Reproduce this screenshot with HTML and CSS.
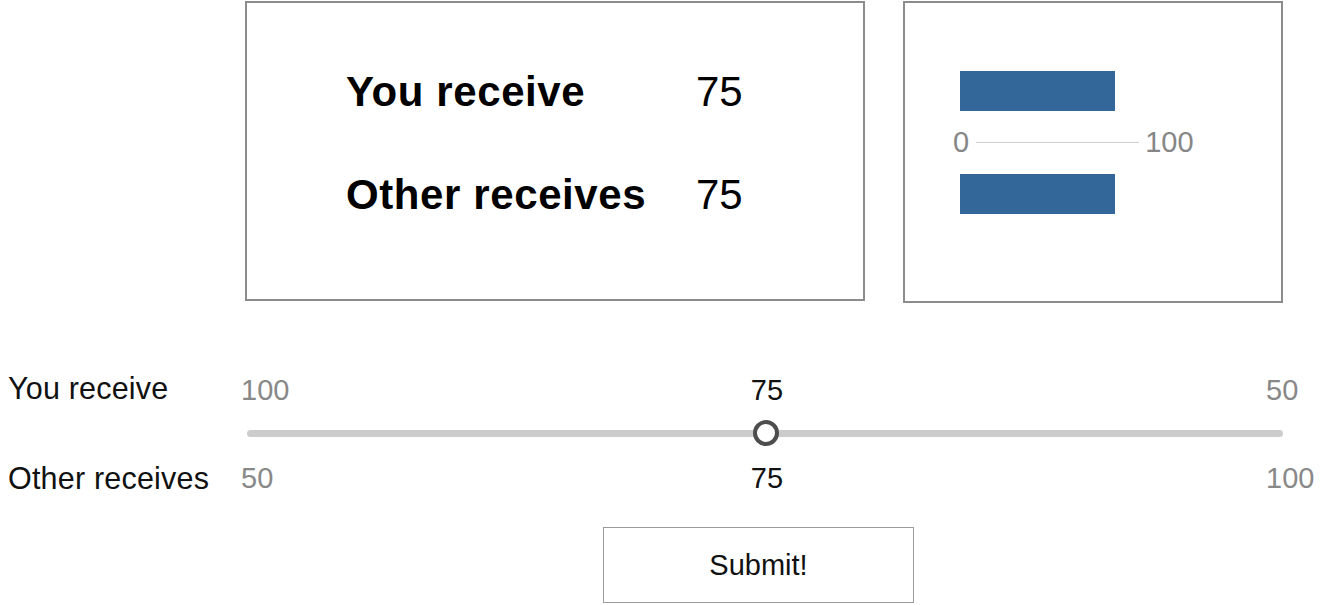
FILE: index.html
```html
<!DOCTYPE html>
<html>
<head>
<meta charset="utf-8">
<link rel="stylesheet" href="styles.css">
</head>
<body>
<div class="top">
  <div class="card summary">
    <div class="sum-label">You receive</div><div class="sum-value">75</div>
    <div class="sum-label">Other receives</div><div class="sum-value">75</div>
  </div>
  <div class="card chart">
    <div class="bar" style="width:155px"></div>
    <div class="axis">
      <span class="axis-label">0</span>
      <span class="axis-line"></span>
      <span class="axis-label">100</span>
    </div>
    <div class="bar" style="width:155px"></div>
  </div>
</div>

<div class="slider-grid">
  <div class="row-label r1">You receive</div>
  <div class="scale r1">
    <span class="end">100</span><span class="mid">75</span><span class="end right">50</span>
  </div>
  <div class="track-row">
    <div class="track">
      <div class="thumb" style="left:50.1%"></div>
    </div>
  </div>
  <div class="row-label r3">Other receives</div>
  <div class="scale r3">
    <span class="end">50</span><span class="mid">75</span><span class="end right">100</span>
  </div>
</div>

<div class="actions">
  <button class="submit">Submit!</button>
</div>
</body>
</html>
```

FILE: styles.css
```css
html, body {
  margin: 0;
  padding: 0;
  background: #ffffff;
}
body {
  font-family: "Liberation Sans", Arial, Helvetica, sans-serif;
  color: #111;
  width: 1320px;
  height: 605px;
  overflow: hidden;
}

.top {
  display: flex;
  gap: 38px;
  padding: 1px 0 0 245px;
}

.card {
  box-sizing: border-box;
  border: 2px solid #8c8c8c;
  background: #fff;
}

.summary {
  width: 620px;
  height: 300px;
  display: grid;
  grid-template-columns: 350px auto;
  grid-auto-rows: 50px;
  row-gap: 53px;
  align-content: start;
  padding: 64px 0 0 99px;
}
.sum-label {
  font-size: 42px;
  line-height: 50px;
  font-weight: bold;
  color: #000;
  letter-spacing: 0.6px;
}
.sum-value {
  font-size: 42px;
  line-height: 50px;
  color: #000;
}

.chart {
  width: 380px;
  height: 302px;
  display: flex;
  flex-direction: column;
  padding-top: 68px;
}
.bar {
  height: 40px;
  margin-left: 55px;
  background: #336699;
}
.axis {
  height: 63px;
  display: flex;
  align-items: center;
  padding-left: 48px;
  gap: 7px;
}
.axis-label {
  font-size: 29px;
  color: #868686;
  line-height: 1;
}
.axis-line {
  width: 163px;
  height: 1px;
  background: #cfcfcf;
  margin-right: -1px;
}

.slider-grid {
  display: grid;
  grid-template-columns: 233px 1080px;
  margin: 68px 0 0 8px;
}
.row-label {
  font-size: 30.5px;
  letter-spacing: 0.2px;
  color: #111;
}
.r1 { line-height: 34px; height: 36px; }
.r3 { line-height: 38px; height: 38px; }
.scale {
  grid-column: 2;
  display: grid;
  grid-template-columns: 500px 52px 1fr;
  font-size: 29px;
  letter-spacing: 0;
}
.r1.scale { line-height: 38px; }
.scale .end { color: #888; }
.scale .mid { color: #111; text-align: center; }
.scale .right { padding-left: 473px; }

.track-row {
  grid-column: 2;
  height: 52px;
  display: flex;
  align-items: center;
  padding-left: 6px;
}
.track {
  position: relative;
  width: 1036px;
  height: 7px;
  border-radius: 4px;
  background: #cccccc;
}
.thumb {
  position: absolute;
  top: 50%;
  width: 26px;
  height: 26px;
  box-sizing: border-box;
  border: 4px solid #4d4d4d;
  border-radius: 50%;
  background: #fff;
  transform: translate(-50%, -50%);
}

.actions {
  display: flex;
  padding: 30px 0 0 603px;
}
.submit {
  width: 311px;
  height: 76px;
  box-sizing: border-box;
  border: 1px solid #9a9a9a;
  background: #fff;
  font-family: "Liberation Sans", Arial, Helvetica, sans-serif;
  font-size: 29px;
  color: #111;
  padding: 0;
}
```
